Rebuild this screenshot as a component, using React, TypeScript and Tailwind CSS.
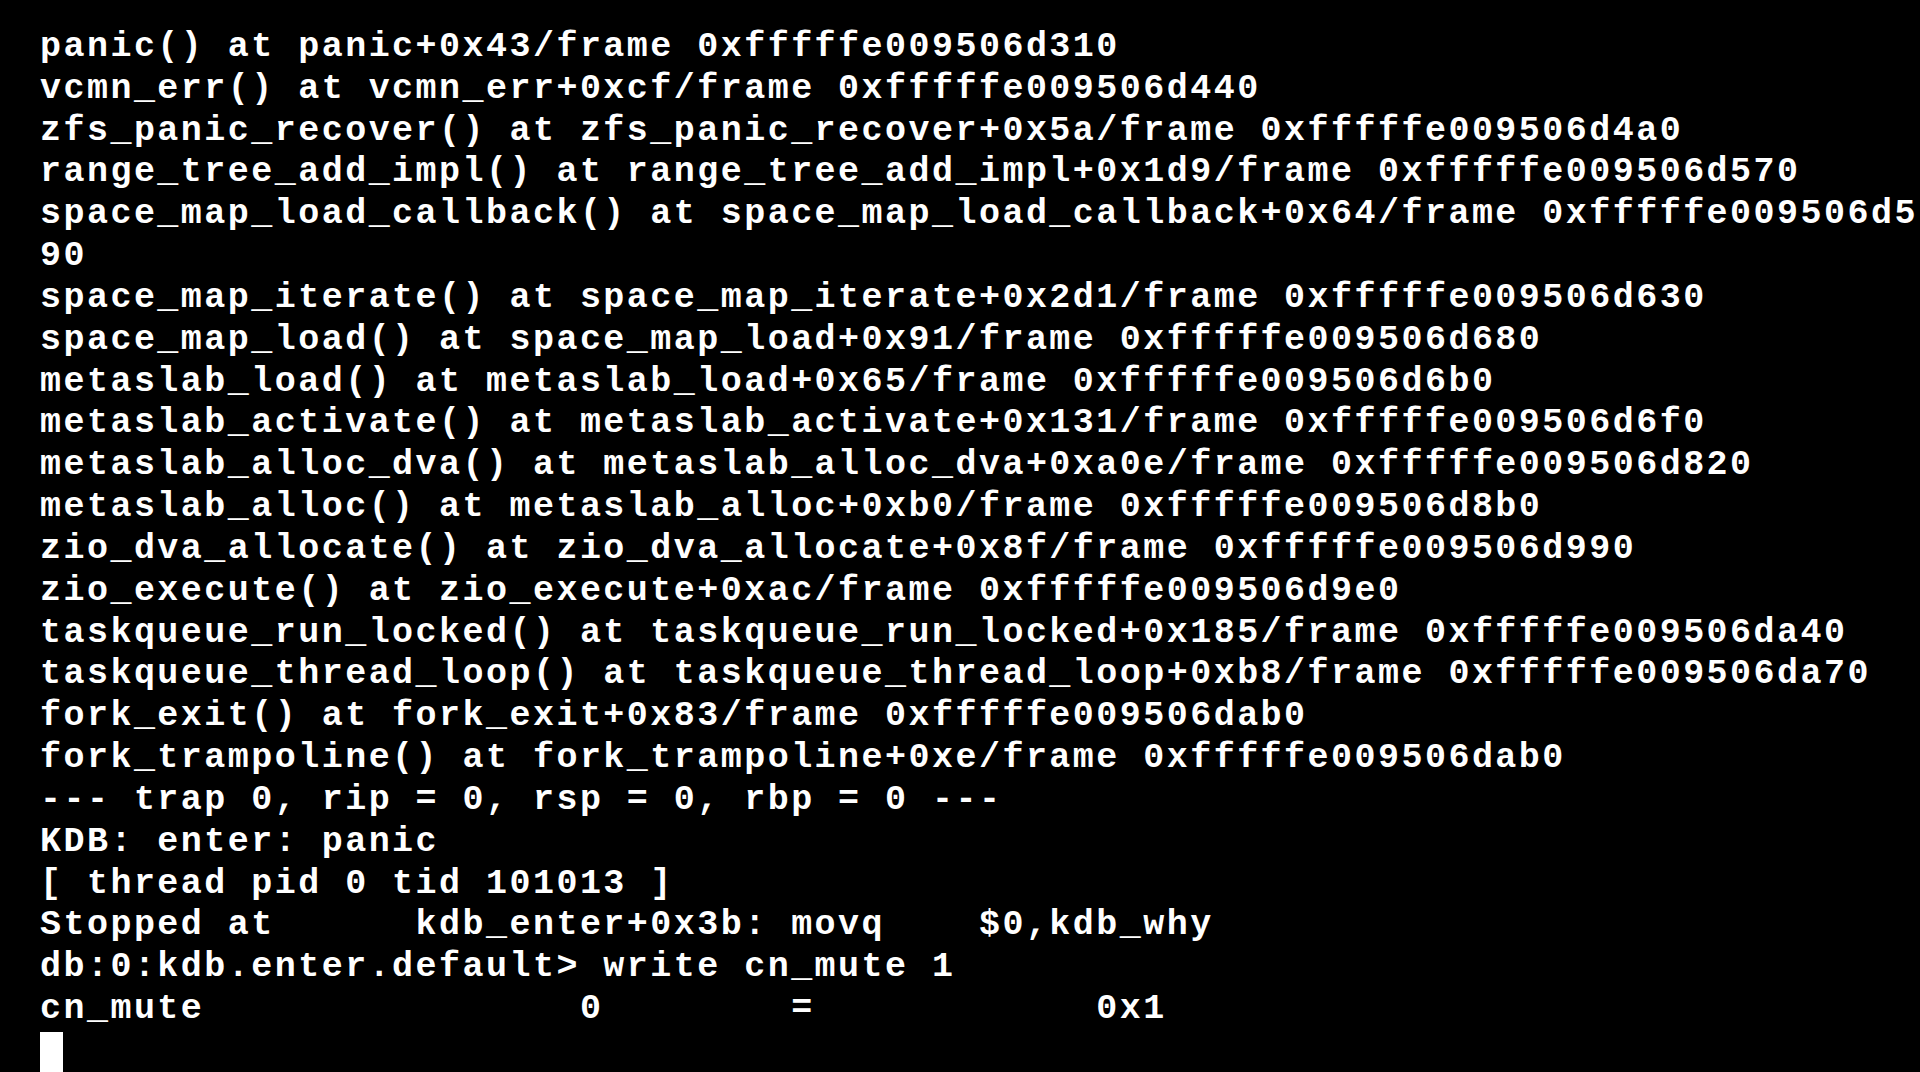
const lines = [
  "panic() at panic+0x43/frame 0xfffffe009506d310",
  "vcmn_err() at vcmn_err+0xcf/frame 0xfffffe009506d440",
  "zfs_panic_recover() at zfs_panic_recover+0x5a/frame 0xfffffe009506d4a0",
  "range_tree_add_impl() at range_tree_add_impl+0x1d9/frame 0xfffffe009506d570",
  "space_map_load_callback() at space_map_load_callback+0x64/frame 0xfffffe009506d5",
  "90",
  "space_map_iterate() at space_map_iterate+0x2d1/frame 0xfffffe009506d630",
  "space_map_load() at space_map_load+0x91/frame 0xfffffe009506d680",
  "metaslab_load() at metaslab_load+0x65/frame 0xfffffe009506d6b0",
  "metaslab_activate() at metaslab_activate+0x131/frame 0xfffffe009506d6f0",
  "metaslab_alloc_dva() at metaslab_alloc_dva+0xa0e/frame 0xfffffe009506d820",
  "metaslab_alloc() at metaslab_alloc+0xb0/frame 0xfffffe009506d8b0",
  "zio_dva_allocate() at zio_dva_allocate+0x8f/frame 0xfffffe009506d990",
  "zio_execute() at zio_execute+0xac/frame 0xfffffe009506d9e0",
  "taskqueue_run_locked() at taskqueue_run_locked+0x185/frame 0xfffffe009506da40",
  "taskqueue_thread_loop() at taskqueue_thread_loop+0xb8/frame 0xfffffe009506da70",
  "fork_exit() at fork_exit+0x83/frame 0xfffffe009506dab0",
  "fork_trampoline() at fork_trampoline+0xe/frame 0xfffffe009506dab0",
  "--- trap 0, rip = 0, rsp = 0, rbp = 0 ---",
  "KDB: enter: panic",
  "[ thread pid 0 tid 101013 ]",
  "Stopped at      kdb_enter+0x3b: movq    $0,kdb_why",
  "db:0:kdb.enter.default> write cn_mute 1",
  "cn_mute                0        =            0x1",
]

const App = () => {
  return (
    <div className="h-[1072px] w-full overflow-hidden bg-black pl-[40px] pt-[27px] text-white">
      <div className="font-['Liberation_Mono',monospace] text-[35px] font-bold leading-[41.84px] tracking-[2.47px]">
        {lines.map((line, i) => (
          <div key={i} className="h-[41.84px] whitespace-pre">
            {line}
          </div>
        ))}
        <div className="flex h-[41.84px] items-end">
          <div className="h-[41px] w-[23px] bg-white" />
        </div>
      </div>
    </div>
  )
}

export default App
